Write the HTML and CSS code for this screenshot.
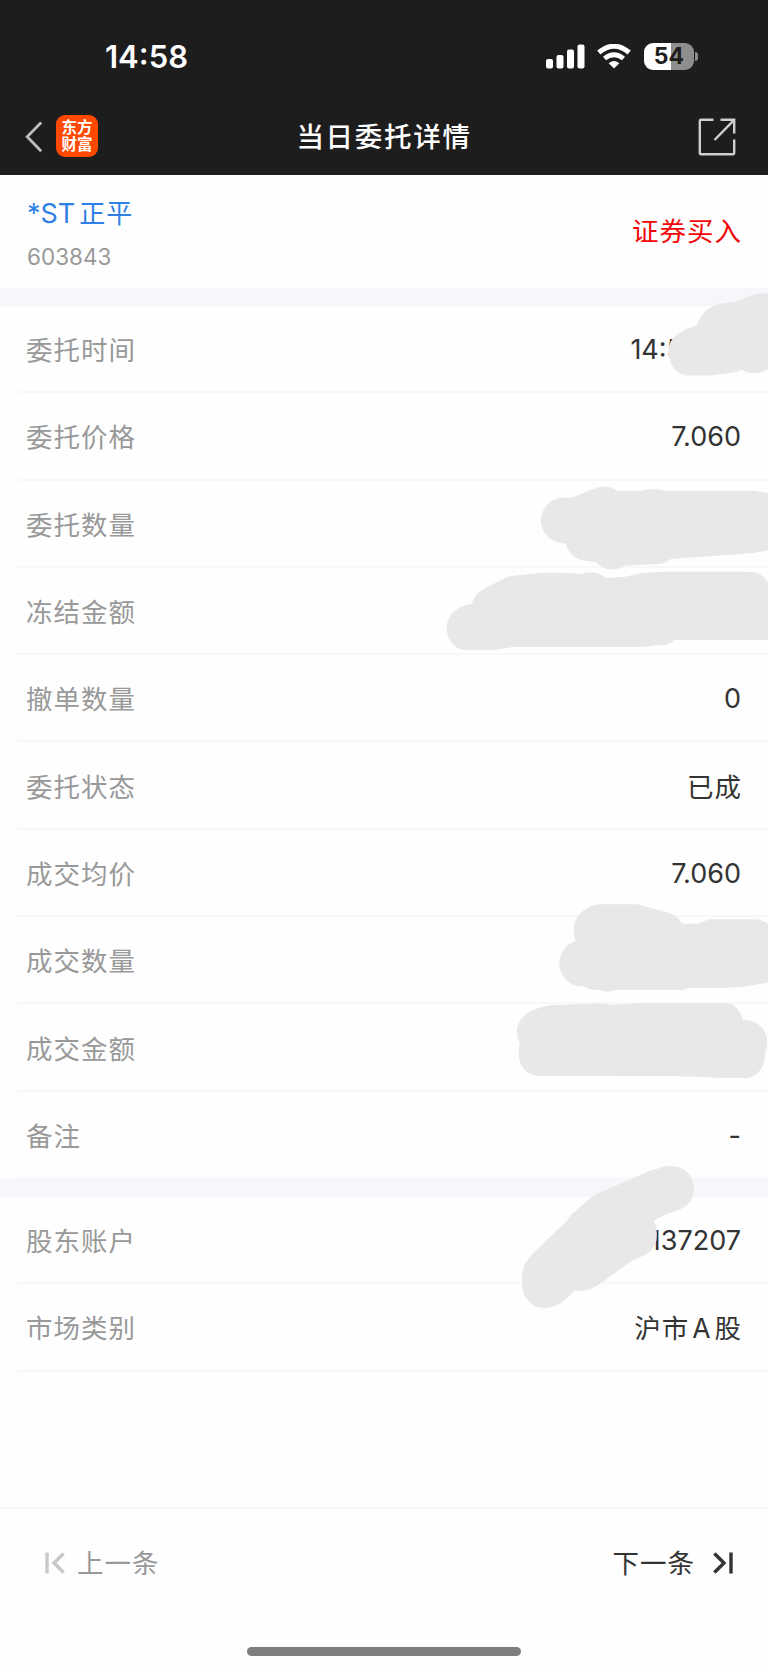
FILE: index.html
```html
<!DOCTYPE html>
<html lang="zh-CN">
<head>
  <meta charset="UTF-8">
  <title>当日委托详情</title>
  <meta name="viewport" content="width=device-width, initial-scale=1.0">
  <link rel="stylesheet" href="styles.css">
</head>
<body>

  <header class="header">
    <!-- Status bar -->
    <div class="status-bar">
      <span class="time">14:58</span>
      <div class="status-icons">
        <svg class="signal" width="40" height="26" viewBox="0 0 40 26" fill="#fff">
          <rect x="1" y="16" width="7" height="9.500" rx="2"/>
          <rect x="11.5" y="12" width="7" height="13.500" rx="2"/>
          <rect x="22" y="6.500" width="7" height="19" rx="2"/>
          <rect x="32.5" y="1.500" width="7" height="24" rx="2"/>
        </svg>
        <svg class="wifi" width="34" height="25" viewBox="0 0 34 25">
          <path d="M1.800 8.5Q17 -4 32.200 8.5" fill="none" stroke="#fff" stroke-width="5"/>
          <path d="M7.5 14.5Q17 6.800 26.5 14.5" fill="none" stroke="#fff" stroke-width="4.8"/>
          <path d="M11.700 19.2Q17 15 22.300 19.2L17 24.4Z" fill="#fff"/>
        </svg>
        <div class="battery"><span>54</span></div>
        <i class="battery-tip"></i>
      </div>
    </div>

    <!-- Nav bar -->
    <div class="nav-bar">
      <div class="nav-left">
        <svg width="18" height="32" viewBox="0 0 18 32" fill="none" stroke="#bdbdbd" stroke-width="2.8">
          <path d="M16.2 1.5L2.2 15.8L16.2 30.2"/>
        </svg>
        <div class="logo"><span>东方</span><span>财富</span></div>
      </div>
      <h1>当日委托详情</h1>
      <svg class="share" width="38" height="38" viewBox="0 0 38 38" fill="none" stroke="#cfcfcf" stroke-width="2.4">
        <path d="M15.5 1.8H3.2Q1.8 1.8 1.8 3.2V34.8Q1.8 36.2 3.2 36.2H34.8Q36.2 36.2 36.2 34.8V21.5"/>
        <path d="M22.5 1.8H36.2V15.5M36.2 1.8L16.5 22"/>
      </svg>
    </div>
  </header>

  <section class="stock">
    <div class="stock-info">
      <div class="stock-name">*ST<span>正平</span></div>
      <div class="stock-code">603843</div>
    </div>
    <div class="direction">证券买入</div>
  </section>

  <section class="list">
    <div class="row"><span class="label">委托时间</span><span class="value time-value">14:5</span></div>
    <div class="row"><span class="label">委托价格</span><span class="value">7.060</span></div>
    <div class="row"><span class="label">委托数量</span></div>
    <div class="row"><span class="label">冻结金额</span></div>
    <div class="row"><span class="label">撤单数量</span><span class="value">0</span></div>
    <div class="row"><span class="label">委托状态</span><span class="value cn">已成</span></div>
    <div class="row"><span class="label">成交均价</span><span class="value">7.060</span></div>
    <div class="row"><span class="label">成交数量</span></div>
    <div class="row"><span class="label">成交金额</span></div>
    <div class="row"><span class="label">备注</span><span class="value">-</span></div>
  </section>

  <section class="list">
    <div class="row"><span class="label">股东账户</span><span class="value">137207</span></div>
    <div class="row"><span class="label">市场类别</span><span class="value cn">沪市<b>A</b>股</span></div>
  </section>

  <footer class="footer">
    <div class="pager">
      <div class="prev">
        <svg width="20" height="22" viewBox="0 0 20 22" fill="none" stroke="#c9c9c9" stroke-width="3.4">
          <path d="M2 .5V21.5M18.6 1.5L9 11L18.6 20.5"/>
        </svg>
        <span>上一条</span>
      </div>
      <div class="next">
        <span>下一条</span>
        <svg width="20" height="22" viewBox="0 0 20 22" fill="none" stroke="#333" stroke-width="3.4">
          <path d="M18 .5V21.5M1.4 1.5L11 11L1.4 20.5"/>
        </svg>
      </div>
    </div>
    <div class="home-bar"></div>
  </footer>

  <!-- Brush strokes hiding private values -->
  <svg class="masks" width="768" height="1670" viewBox="0 0 768 1670" fill="#e8e8e8">
    <path d="M768 293.5H757C749 295 742 300 733 302.5C714 302.500 703 309 697 325C691 328 687 328 683 331C674 335 668.500 342 668.500 351C668.500 366 678 375.500 689 375.500H712C722 373 735 374 741 369.500C750 375 761 374 768 369Z"/>
    <path d="M541 521C541 508 551 497.700 563 497.700H570Q574 497.700 576 496L591.700 489.500Q604 484.500 614 489Q616 490.700 619 490.700H641.700Q653 487.500 665 490.700H752.700L768 492.700V550.300L754 553L670.700 559Q667 563 660 563.700L625 565.700C615 571.500 603 570.500 596.700 562.300L586.700 561Q571 560 565.700 543.300C552 544 541 533 541 521Z"/>
    <path d="M446.700 628.300C447 615 457 606 471.700 604Q475 593 485 588.300L505 578Q508 576.300 513 575.800L541.700 572.700H566.700L580 574C590 571 600 572 606 578L625 576.700L641.700 573L660 571.700H750Q762 572 768 582.700V640H674.300Q669 645 663.300 645.300H655L643 647H513L495 650H466C455 650 446.700 640 446.700 628.300Z"/>
    <path d="M559.300 963.300C559.500 953 566 944 576 941Q573.700 937 573.700 931.700C573 916 587 905 600 904.300H637.300L670 913.300Q678 916 682 923.700H698.300L706 920.500Q708 919.300 710.700 919.300H756.700Q763 920 768 924V982.700L743.300 986.700L726.700 987.700H690L686 989Q684 990 681.700 990H616Q607 993 600 990H594Q588 989 582.700 986C570 987 559.300 976 559.300 963.300Z"/>
    <path d="M517 1031.700C517 1016 533 1008 550 1005.300L603.300 1003.300L610 1004.700L643 1003H725C734 1003 740 1010 743 1020C757 1019 767.300 1030 767.300 1041.700Q767.300 1047 765.300 1051.700C766 1067 757 1077 746.700 1078H726.700L680 1076.300L536.700 1075.700C523 1074 516 1061 519.700 1044Q517 1038 517 1031.700Z"/>
    <path d="M522 1276.700C521 1262 536 1251 541.700 1245L566.700 1221L570.700 1215.300L591.700 1197Q594 1195 598 1193.500L646 1172.500Q650 1170 657 1169C662 1166.500 666 1166 671.700 1166C685 1166 694 1177 694 1188.300C694 1199 687 1208 676.700 1210.700Q664 1214 654 1221Q657.500 1228 656.700 1236.700C657 1245 651 1253 643.300 1255.700Q634 1259 626.700 1264.300L600 1284Q590 1291 580 1291Q577 1290 574 1290.700C566 1300 557 1308 544 1308C530 1308 521.500 1295 522 1283Z"/>
  </svg>

</body>
</html>
```

FILE: styles.css
```css
* { box-sizing: border-box; }

body {
  margin: 0;
  width: 768px;
  height: 1670px;
  position: relative;
  display: flex;
  flex-direction: column;
  overflow: hidden;
  background: #fefefe;
  color: #333;
  font-family: Inter, "Noto Sans CJK SC", sans-serif;
  font-size: 27px;
}

/* Header */
.header {
  height: 175px;
  flex-shrink: 0;
  background: #1d1d1d;
  color: #fff;
}

.status-bar {
  height: 98px;
  padding: 14px 70px 0 105px;
  display: flex;
  justify-content: space-between;
  align-items: center;
}

.time {
  padding-top: 2px;
  font-size: 31px;
  font-weight: 600;
  line-height: 40px;
}

.status-icons {
  display: flex;
  align-items: center;
}

.wifi { margin: 0 13px 0 12px; }

.battery {
  width: 50px;
  height: 27px;
  border-radius: 9px;
  background: linear-gradient(90deg, #fff 54%, #8e8e8e 54%);
  color: #1d1d1d;
  font-size: 23px;
  font-weight: 700;
  line-height: 27px;
  text-align: center;
}

.battery-tip {
  width: 3px;
  height: 9px;
  margin-left: 1px;
  border-radius: 0 4px 4px 0;
  background: #8e8e8e;
}

.nav-bar {
  height: 77px;
  padding: 0 32px 0 25px;
  display: grid;
  grid-template-columns: 1fr auto 1fr;
  align-items: center;
}

.nav-left {
  display: flex;
  align-items: center;
  gap: 13px;
}

.logo {
  width: 42px;
  height: 42px;
  margin-top: -1px;
  padding-top: 4px;
  border-radius: 9px;
  background: #ff4800;
  display: flex;
  flex-direction: column;
  align-items: center;
  font-size: 15.5px;
  font-weight: 700;
  line-height: 17px;
}

h1 {
  margin: 0;
  padding-left: 7px;
  font-size: 27.5px;
  font-weight: 500;
  letter-spacing: 1.7px;
  line-height: 40px;
}

.share { justify-self: end; }

/* Stock summary */
.stock {
  height: 113px;
  flex-shrink: 0;
  padding: 0 26px 0 27px;
  display: flex;
  justify-content: space-between;
  align-items: center;
}

.stock-info { padding-top: 5px; }

.stock-name {
  color: #2f7fe6;
  line-height: 40px;
}

.stock-name span {
  margin-left: 4px;
  font-size: 26px;
  letter-spacing: 1px;
}

.stock-code {
  margin-top: 6px;
  color: #999;
  font-size: 22.5px;
  line-height: 34px;
}

.direction {
  padding-bottom: 4px;
  color: #f00808;
  font-size: 26.5px;
  letter-spacing: 1px;
}

/* Detail rows */
.list {
  flex-shrink: 0;
  border-top: 18px solid #f6f7fa;
}

.row {
  height: 87.3px;
  margin-left: 17px;
  padding: 0 27px 0 9px;
  display: flex;
  justify-content: space-between;
  align-items: center;
  border-bottom: 2px solid #f8f8f8;
}

.label {
  color: #999;
  font-size: 26.5px;
  letter-spacing: 1px;
}

.value { padding-top: 2px; }

.value.cn {
  padding-top: 0;
  font-size: 26.5px;
  letter-spacing: 1px;
  margin-right: -1px;
}

.value b {
  margin: 0 3px;
  font-weight: 400;
}

.time-value { margin-right: 58px; }

/* Footer */
.footer {
  margin-top: auto;
  height: 163px;
  flex-shrink: 0;
  border-top: 2px solid #f8f8f8;
}

.pager {
  height: 108px;
  padding: 0 35px 0 45px;
  display: flex;
  justify-content: space-between;
  align-items: center;
  font-size: 26.5px;
  letter-spacing: 1px;
}

.pager span { padding-bottom: 4px; }

.prev, .next {
  display: flex;
  align-items: center;
}

.prev { gap: 12px; color: #999; }
.next { gap: 18px; }

.home-bar {
  width: 274px;
  height: 9px;
  margin: 30px auto 0;
  border-radius: 5px;
  background: #7f7f7f;
}

.masks {
  position: absolute;
  top: 0;
  left: 0;
}
```
